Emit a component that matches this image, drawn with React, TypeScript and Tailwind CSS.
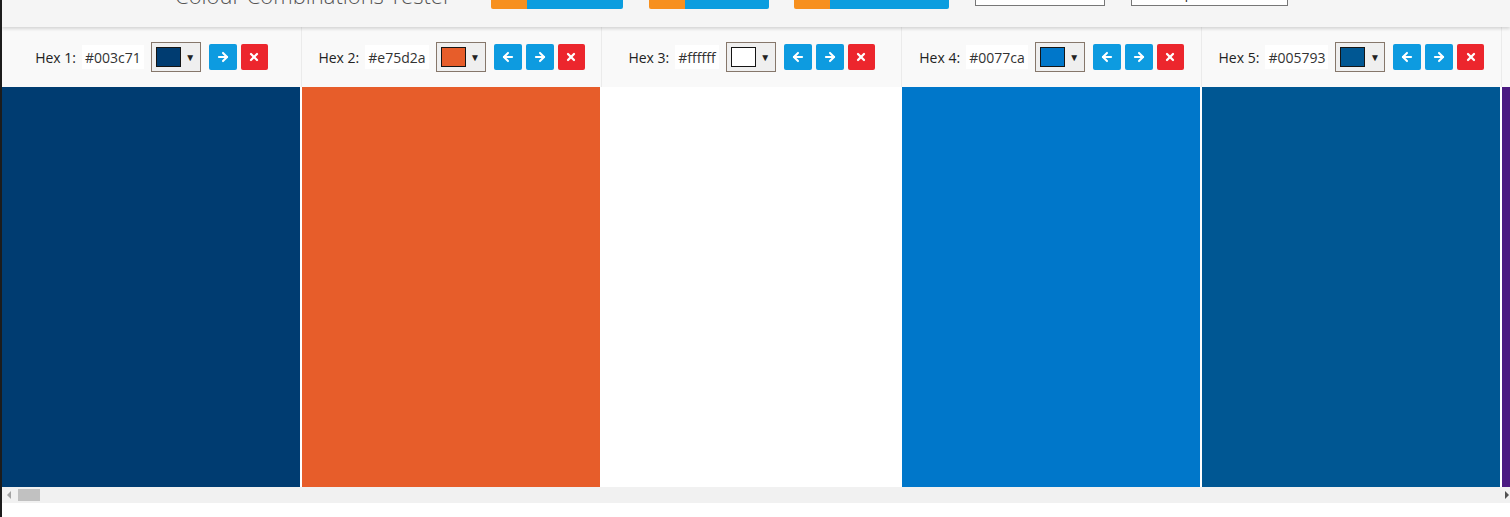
import { ArrowLeft, ArrowRight, X } from "lucide-react";

interface Swatch {
  hex: string;
}

const swatches: Swatch[] = [
  { hex: "#003c71" },
  { hex: "#e75d2a" },
  { hex: "#ffffff" },
  { hex: "#0077ca" },
  { hex: "#005793" },
  { hex: "#4b1b82" },
];

function HeaderButton({ label, width }: { label: string; width: string }) {
  return (
    <div className={`flex h-[40px] ${width} shrink-0 rounded-b-[2px] overflow-hidden`}>
      <div className="w-[36px] bg-[#f7901e]" />
      <div className="flex-1 bg-[#0b9ddf] text-white text-[15px] flex items-end justify-center pb-[10px]">
        {label}
      </div>
    </div>
  );
}

function ColumnHeader({ index, hex, first }: { index: number; hex: string; first: boolean }) {
  return (
    <div className="h-[60px] bg-[#f9f9f9] border-r border-[#ebebeb] flex items-center justify-center">
      <span className="text-[14px] text-[#222]">Hex {index}:</span>
      <span className="ml-[6px] bg-white px-[3px] h-[24px] flex items-center text-[14px] text-[#333]">{hex}</span>
      <div className="ml-[7px] w-[50px] h-[30px] border border-[#86776b] bg-[#efefef] flex items-center pl-[4px]">
        <div className="w-[25px] h-[20px] border border-[#151515]" style={{ backgroundColor: hex }} />
        <span className="flex-1 text-center text-[10px] text-[#222] leading-none">▼</span>
      </div>
      <div className="ml-[8px] flex gap-[4px]">
        {!first && (
          <button className="w-[28px] h-[26px] rounded-[2px] bg-[#0d9be0] flex items-center justify-center text-white">
            <ArrowLeft size={14} strokeWidth={3.5} />
          </button>
        )}
        <button className="w-[28px] h-[26px] rounded-[2px] bg-[#0d9be0] flex items-center justify-center text-white">
          <ArrowRight size={14} strokeWidth={3.5} />
        </button>
        <button className="w-[27px] h-[26px] rounded-[2px] bg-[#ec262d] flex items-center justify-center text-white">
          <X size={12} strokeWidth={4.5} />
        </button>
      </div>
    </div>
  );
}

export default function App() {
  return (
    <div className="w-[1510px] h-[517px] overflow-hidden bg-white border-l-2 border-[#1c1c1c] flex flex-col font-['Open_Sans',sans-serif]">
      <header className="relative z-10 h-[27px] shrink-0 bg-[#f5f5f5] overflow-hidden shadow-[0_2px_3px_rgba(0,0,0,0.14)]">
        <div className="-mt-[31px] h-[40px] flex items-end pl-[173px]">
          <div className="w-[316px] shrink-0 mb-[3px] text-[22px] leading-none font-light text-[#555] whitespace-nowrap">
            Colour Combinations Tester
          </div>
          <HeaderButton label="Add Colour" width="w-[132px]" />
          <div className="w-[26px] shrink-0" />
          <HeaderButton label="Settings" width="w-[120px]" />
          <div className="w-[25px] shrink-0" />
          <HeaderButton label="Save Combo" width="w-[155px]" />
          <div className="w-[26px] shrink-0" />
          <div className="w-[130px] h-[24px] mb-[3px] shrink-0 bg-white border border-[#777] text-[13px] px-[4px] leading-[22px] text-[#222]">
            Select a Combo
          </div>
          <div className="w-[26px] shrink-0" />
          <div className="w-[157px] h-[24px] mb-[3px] shrink-0 bg-white border border-[#777] text-[13px] px-[4px] leading-[22px] text-[#222]">
            Other Options
          </div>
        </div>
      </header>

      <div className="flex h-[460px] shrink-0 overflow-hidden">
        {swatches.map((s, i) => (
          <div key={i} className="w-[300px] shrink-0 flex flex-col">
            <ColumnHeader index={i + 1} hex={s.hex} first={i === 0} />
            <div className="flex-1 border-r-2 border-white" style={{ backgroundColor: s.hex }} />
          </div>
        ))}
      </div>

      <div className="h-[16px] shrink-0 bg-[#f1f1f1] flex items-center relative">
        <div className="ml-[5px] w-0 h-0 border-y-[4px] border-y-transparent border-r-[4px] border-r-[#a3a3a3]" />
        <div className="ml-[7px] w-[22px] h-[12px] bg-[#c1c1c1]" />
        <div className="ml-auto mr-[1px] w-0 h-0 border-y-[4px] border-y-transparent border-l-[4px] border-l-[#505050]" />
      </div>
      <div className="flex-1 bg-white" />
    </div>
  );
}
